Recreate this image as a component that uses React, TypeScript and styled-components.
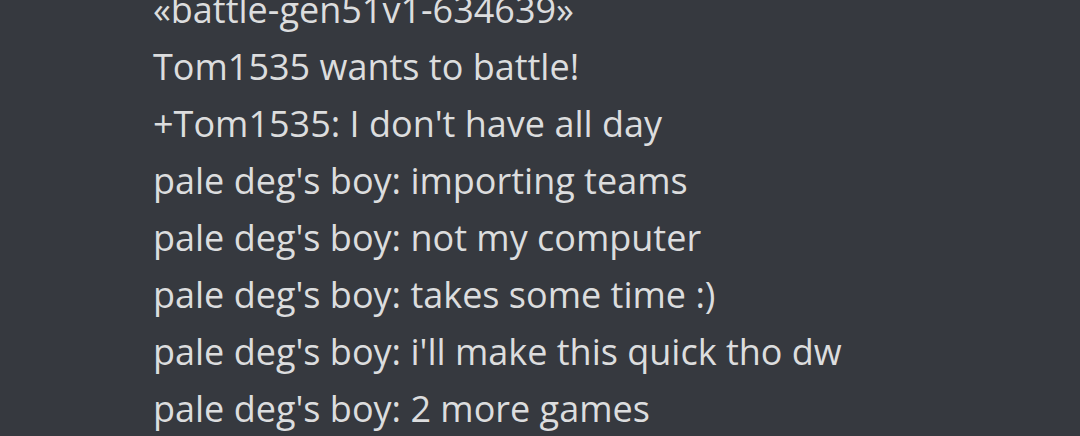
import styled, { createGlobalStyle } from "styled-components";

const GlobalStyle = createGlobalStyle`
  html, body {
    margin: 0;
    padding: 0;
    background: #36393f;
    overflow: hidden;
  }
`;

const ChatLog = styled.div`
  width: 1080px;
  height: 436px;
  overflow: hidden;
  background: #36393f;
  box-sizing: border-box;
  padding-left: 153px;
`;

const Lines = styled.div`
  margin-top: -19px;
  display: flex;
  flex-direction: column;
`;

const Line = styled.div`
  font-family: "Open Sans", sans-serif;
  font-size: 36px;
  line-height: 57px;
  color: #dcddde;
  white-space: pre;
`;

const lines = [
  "«battle-gen51v1-634639»",
  "Tom1535 wants to battle!",
  "+Tom1535: I don't have all day",
  "pale deg's boy: importing teams",
  "pale deg's boy: not my computer",
  "pale deg's boy: takes some time :)",
  "pale deg's boy: i'll make this quick tho dw",
  "pale deg's boy: 2 more games",
];

function App() {
  return (
    <ChatLog>
      <GlobalStyle />
      <Lines>
        {lines.map((text, i) => (
          <Line key={i}>{text}</Line>
        ))}
      </Lines>
    </ChatLog>
  );
}

export default App;
